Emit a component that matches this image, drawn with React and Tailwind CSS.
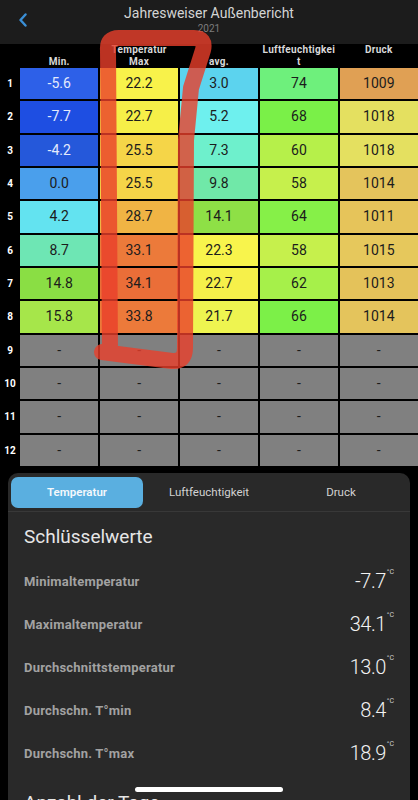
import React from "react";

const rows = [
  [["-5.6", "bg-[#2d60e8]", "text-[#e4eafc]"], ["22.2", "bg-[#f8f24a]"], ["3.0", "bg-[#5cd3ee]"], ["74", "bg-[#6ef07c]"], ["1009", "bg-[#e0a054]"]],
  [["-7.7", "bg-[#1e4ee2]", "text-[#e4eafc]"], ["22.7", "bg-[#f6ef48]"], ["5.2", "bg-[#6ef0ee]"], ["68", "bg-[#7af048]"], ["1018", "bg-[#e4e060]"]],
  [["-4.2", "bg-[#2558da]", "text-[#e4eafc]"], ["25.5", "bg-[#f5d548]"], ["7.3", "bg-[#6ef0cc]"], ["60", "bg-[#b6f04a]"], ["1018", "bg-[#e4e060]"]],
  [["0.0", "bg-[#4a9fec]"], ["25.5", "bg-[#f5d548]"], ["9.8", "bg-[#70e8a8]"], ["58", "bg-[#c6f04c]"], ["1014", "bg-[#e4c45c]"]],
  [["4.2", "bg-[#63e3f0]"], ["28.7", "bg-[#f0b444]"], ["14.1", "bg-[#8ee046]"], ["64", "bg-[#86f048]"], ["1011", "bg-[#e6c45a]"]],
  [["8.7", "bg-[#6ee6b4]"], ["33.1", "bg-[#ec7a3a]"], ["22.3", "bg-[#f8f44c]"], ["58", "bg-[#c6f04c]"], ["1015", "bg-[#e6c85c]"]],
  [["14.8", "bg-[#8ade44]"], ["34.1", "bg-[#ea6e38]"], ["22.7", "bg-[#f6f04a]"], ["62", "bg-[#a6f04a]"], ["1013", "bg-[#e4c25a]"]],
  [["15.8", "bg-[#a6e64a]"], ["33.8", "bg-[#ec7a3a]"], ["21.7", "bg-[#eef450]"], ["66", "bg-[#7cf048]"], ["1014", "bg-[#e4c45c]"]],
];

const empty = [9, 10, 11, 12];

const stats = [
  ["Minimaltemperatur", "-7.7"],
  ["Maximaltemperatur", "34.1"],
  ["Durchschnittstemperatur", "13.0"],
  ["Durchschn. T°min", "8.4"],
  ["Durchschn. T°max", "18.9"],
];

function Row({ n, cells }) {
  return (
    <div className="flex h-[31.33px]">
      <div className="w-[20px] flex items-center justify-center text-[10px] font-bold text-white">{n}</div>
      <div className="flex-1 grid grid-cols-5 gap-x-[1.5px]">
        {cells.map((c, i) => (
          <div
            key={i}
            className={`flex items-center justify-center text-[14px] ${c[1]} ${c[2] || "text-[#1c1c1c]"}`}
          >
            {c[0]}
          </div>
        ))}
      </div>
    </div>
  );
}

export default function App() {
  return (
    <div className="relative w-[418px] h-[800px] overflow-hidden bg-black" style={{ fontFamily: "Roboto, 'Liberation Sans', sans-serif" }}>
      {/* Header */}
      <div className="relative h-[44px] bg-[#1c1c1c] flex flex-col items-center pt-[5px]">
        <svg className="absolute left-[18px] top-[13px]" width="10" height="14" viewBox="0 0 10 14">
          <polyline points="7.5,1.5 2.5,7 7.5,12.5" fill="none" stroke="#3a8fd6" strokeWidth="2.4" strokeLinecap="round" strokeLinejoin="round" />
        </svg>
        <div className="text-[14px] leading-[17px] text-[#d4d4d4]">Jahresweiser Außenbericht</div>
        <div className="text-[10px] leading-[12px] mt-[1px] text-[#7c7c7c]">2021</div>
      </div>

      {/* Table */}
      <div className="flex flex-col gap-y-[2px]">
        <div className="flex h-[22px]">
          <div className="w-[20px]" />
          <div className="flex-1 grid grid-cols-5 gap-x-[1.5px] text-[10px] leading-[12px] font-bold text-[#d8d8d8] tracking-[0.3px] text-center">
            <div><br />Min.</div>
            <div>Temperatur<br />Max</div>
            <div><br />avg.</div>
            <div>Luftfeuchtigkei<br />t</div>
            <div>Druck</div>
          </div>
        </div>
        {rows.map((r, i) => (
          <Row key={i} n={i + 1} cells={r} />
        ))}
        {empty.map((n) => (
          <Row key={n} n={n} cells={[0, 1, 2, 3, 4].map(() => ["-", "bg-[#808080]"])} />
        ))}
      </div>

      {/* Bottom panel */}
      <div className="mx-[8px] mt-[7px] rounded-t-[10px] bg-[#292929]">
        <div className="flex px-[3px] pt-[4px] pb-[3px] border-b border-[#383838]">
          <div className="w-[132px] h-[31px] rounded-[7px] bg-[#5aafe0] flex items-center justify-center text-[11.5px] font-semibold text-[#f4f8fc]">
            Temperatur
          </div>
          <div className="w-[132px] h-[31px] flex items-center justify-center text-[11.5px] text-[#d2d2d2]">
            Luftfeuchtigkeit
          </div>
          <div className="w-[132px] h-[31px] flex items-center justify-center text-[11.5px] text-[#d2d2d2]">
            Druck
          </div>
        </div>
        <div className="pl-[16px] pr-[16px]">
          <div className="mt-[13px] text-[19px] leading-[24px] text-[#e6e6e6]">Schlüsselwerte</div>
          <div className="mt-[11px] flex flex-col">
            {stats.map(([l, v]) => (
              <div key={l} className="h-[43px] flex items-center justify-between">
                <div className="text-[13px] font-bold text-[#a2a2a2] tracking-[0.2px]">{l}</div>
                <div className="flex items-start">
                  <span className="text-[20px] font-light leading-[24px] text-[#f2f2f2] tracking-[-0.5px]">{v}</span>
                  <span className="text-[7px] leading-[8px] text-[#cfcfcf] mt-[-1px] ml-[1px]">°C</span>
                </div>
              </div>
            ))}
          </div>
          <div className="mt-[16px] text-[19px] leading-[24px] text-[#e6e6e6]">Anzahl der Tage</div>
        </div>
      </div>

      {/* Hand-drawn red annotation */}
      <svg className="absolute left-0 top-0 pointer-events-none" width="418" height="800" viewBox="0 0 418 800">
        <path
          d="M 110 352 L 108 50 Q 107 38 119 38 L 194 38 Q 206 38 203 50 L 191 88 L 186 140 L 185 348 Q 185 362 172 361 L 102 352"
          fill="none"
          stroke="#ea3f2b"
          strokeOpacity="0.8"
          strokeWidth="16"
          strokeLinecap="round"
          strokeLinejoin="round"
        />
      </svg>

      {/* Home indicator */}
      <div className="absolute bottom-[8px] left-[135px] w-[148px] h-[5px] rounded-full bg-white" />
    </div>
  );
}
